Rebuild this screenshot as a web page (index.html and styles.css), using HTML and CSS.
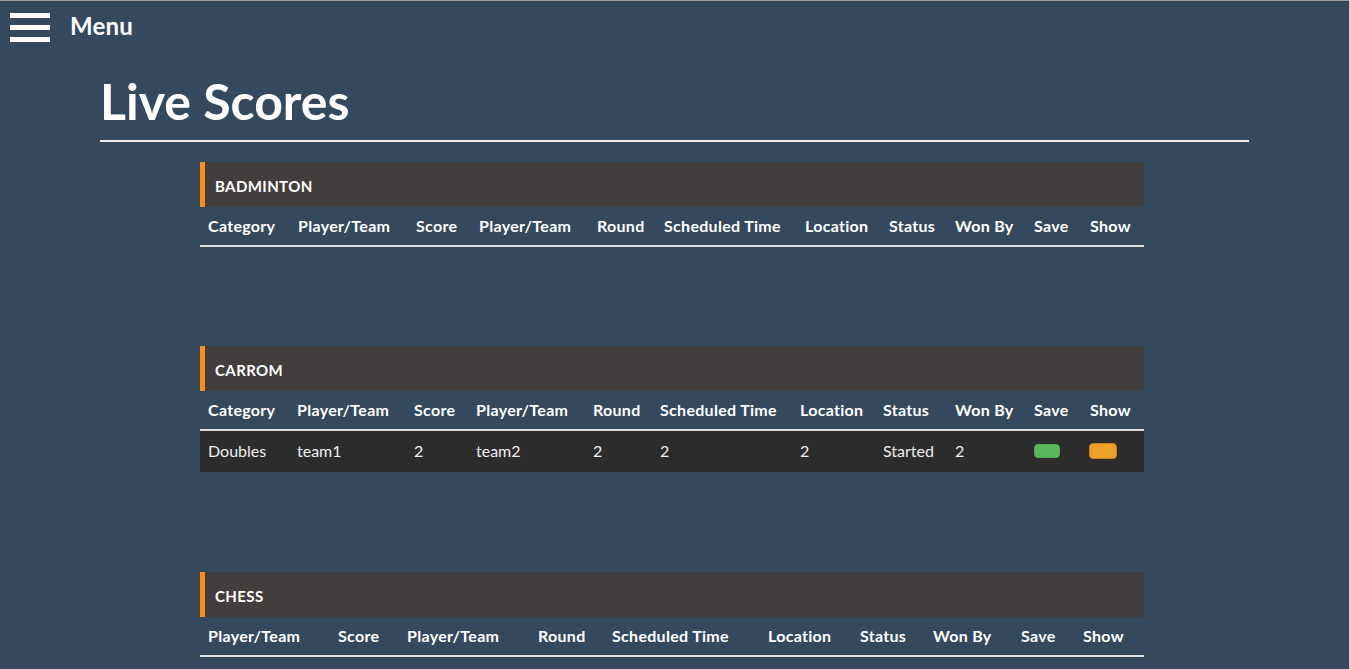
FILE: index.html
```html
<!DOCTYPE html>
<html lang="en">
<head>
<meta charset="utf-8">
<title>Live Scores</title>
<link rel="stylesheet" href="styles.css">
</head>
<body>
<header class="topbar">
  <span class="burger"><span></span><span></span><span></span></span>
  <span class="menu-label">Menu</span>
</header>
<main class="container">
  <h1 class="title">Live Scores</h1>

  <section class="sport sport-empty">
    <div class="sport-head">BADMINTON</div>
    <table class="scores">
      <colgroup>
        <col class="b1"><col class="b2"><col class="b3"><col class="b4"><col class="b5"><col class="b6"><col class="b7"><col class="b8"><col class="b9"><col class="b10"><col class="b11">
      </colgroup>
      <thead>
        <tr><th>Category</th><th>Player/Team</th><th>Score</th><th>Player/Team</th><th>Round</th><th>Scheduled Time</th><th>Location</th><th>Status</th><th>Won By</th><th>Save</th><th>Show</th></tr>
      </thead>
      <tbody></tbody>
    </table>
  </section>

  <section class="sport">
    <div class="sport-head">CARROM</div>
    <table class="scores">
      <colgroup>
        <col class="c1"><col class="c2"><col class="c3"><col class="c4"><col class="c5"><col class="c6"><col class="c7"><col class="c8"><col class="c9"><col class="c10"><col class="c11">
      </colgroup>
      <thead>
        <tr><th>Category</th><th>Player/Team</th><th>Score</th><th>Player/Team</th><th>Round</th><th>Scheduled Time</th><th>Location</th><th>Status</th><th>Won By</th><th>Save</th><th>Show</th></tr>
      </thead>
      <tbody>
        <tr><td>Doubles</td><td>team1</td><td>2</td><td>team2</td><td>2</td><td>2</td><td>2</td><td>Started</td><td>2</td><td><button class="btn btn-save" type="button"></button></td><td><button class="btn btn-show" type="button"></button></td></tr>
      </tbody>
    </table>
  </section>

  <section class="sport">
    <div class="sport-head">CHESS</div>
    <table class="scores">
      <colgroup>
        <col class="h1c"><col class="h2c"><col class="h3c"><col class="h4c"><col class="h5c"><col class="h6c"><col class="h7c"><col class="h8c"><col class="h9c"><col class="h10c">
      </colgroup>
      <thead>
        <tr><th>Player/Team</th><th>Score</th><th>Player/Team</th><th>Round</th><th>Scheduled Time</th><th>Location</th><th>Status</th><th>Won By</th><th>Save</th><th>Show</th></tr>
      </thead>
      <tbody></tbody>
    </table>
  </section>
</main>
</body>
</html>
```

FILE: styles.css
```css
html, body {
  margin: 0;
  padding: 0;
}
body {
  background: #34495e;
  color: #ffffff;
  font-family: Lato, "Open Sans", "Liberation Sans", sans-serif;
  border-top: 1px solid #9c9c9c;
  min-height: 668px;
}
.topbar {
  display: flex;
  align-items: flex-start;
  gap: 20px;
  padding: 12px 10px 0;
  height: 29px;
}
.burger {
  display: flex;
  flex-direction: column;
  justify-content: space-between;
  width: 40px;
  height: 29px;
}
.burger span {
  display: block;
  height: 5px;
  background: #ffffff;
}
.menu-label {
  font-size: 24px;
  font-weight: 700;
  line-height: 26px;
  letter-spacing: 0.2px;
}
.container {
  margin: 0 100px;
}
.title {
  margin: 29px 0 20px;
  padding-bottom: 9px;
  border-bottom: 2px solid #eeeeee;
  font-size: 50px;
  font-weight: 700;
  line-height: 60px;
}
.sport {
  margin: 0 0 100px 100px;
  width: 944px;
}
.sport-empty {
  margin-bottom: 99px;
}
.sport-head {
  background: #423e3d;
  border-left: 5px solid #ff8c1a;
  padding: 15px 10px 12px;
  font-size: 15px;
  font-weight: 700;
  line-height: 18px;
  letter-spacing: 0.4px;
}
.scores {
  width: 944px;
  border-collapse: collapse;
  table-layout: fixed;
}
.scores th {
  text-align: left;
  font-size: 16px;
  font-weight: 700;
  line-height: 18px;
  letter-spacing: 0.3px;
  padding: 10px 8px;
  border-bottom: 2px solid #dddddd;
  white-space: nowrap;
}
.scores td {
  background: #2c2c2c;
  color: #eeeeee;
  font-size: 16px;
  font-weight: 400;
  line-height: 21px;
  padding: 9px 8px 11px;
  white-space: nowrap;
  vertical-align: middle;
}
.btn {
  display: block;
  margin: 1px 0 0;
  padding: 0;
  border-radius: 4px;
  cursor: pointer;
}
.btn-save {
  width: 26px;
  height: 14px;
  background: #5cb85c;
  border: 1px solid #4cae4c;
}
.btn-show {
  width: 28px;
  height: 16px;
  margin-left: -1px;
  background: #efa02a;
  border: 1px solid #c4841a;
}

/* badminton columns */
.b1 { width: 90px; } .b2 { width: 118px; } .b3 { width: 63px; } .b4 { width: 118px; }
.b5 { width: 67px; } .b6 { width: 141px; } .b7 { width: 84px; } .b8 { width: 66px; }
.b9 { width: 79px; } .b10 { width: 56px; } .b11 { width: 62px; }

/* carrom columns */
.c1 { width: 89px; } .c2 { width: 117px; } .c3 { width: 62px; } .c4 { width: 117px; }
.c5 { width: 67px; } .c6 { width: 140px; } .c7 { width: 83px; } .c8 { width: 72px; }
.c9 { width: 79px; } .c10 { width: 56px; } .c11 { width: 62px; }

/* chess columns */
.h1c { width: 130px; } .h2c { width: 69px; } .h3c { width: 131px; } .h4c { width: 74px; }
.h5c { width: 156px; } .h6c { width: 92px; } .h7c { width: 73px; } .h8c { width: 88px; }
.h9c { width: 62px; } .h10c { width: 69px; }
```
